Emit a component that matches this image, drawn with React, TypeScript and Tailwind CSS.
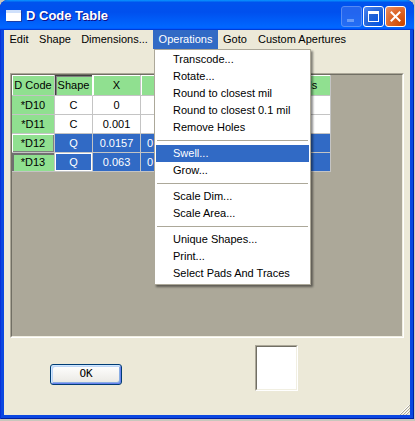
const columns = [
  { label: 'D Code', width: 'w-[43px]' },
  { label: 'Shape', width: 'w-[38px]' },
  { label: 'X', width: 'w-[48px]' },
  { label: 'Y', width: 'w-[48px]' },
  { label: '', width: 'w-[48px]' },
  { label: '', width: 'w-[48px]' },
  { label: 'Mils', width: 'w-[46px]' },
];

const rows = [
  { code: '*D10', cells: ['C', '0', '', '', '', ''], selected: false },
  { code: '*D11', cells: ['C', '0.001', '', '', '', ''], selected: false },
  { code: '*D12', cells: ['Q', '0.0157', '0', '', '', ''], selected: true },
  { code: '*D13', cells: ['Q', '0.063', '0', '', '', ''], selected: true },
];

const menuBar = [
  { label: 'Edit', width: 'w-[30px]' },
  { label: 'Shape', width: 'w-[42px]' },
  { label: 'Dimensions...', width: 'w-[77px]' },
  { label: 'Operations', width: 'w-[65px]', open: true },
  { label: 'Goto', width: 'w-[34px]' },
  { label: 'Custom Apertures', width: 'w-[100px]' },
];

type MenuEntry = { label: string; active?: boolean } | 'sep';

const operations: MenuEntry[] = [
  { label: 'Transcode...' },
  { label: 'Rotate...' },
  { label: 'Round to closest mil' },
  { label: 'Round to closest 0.1 mil' },
  { label: 'Remove Holes' },
  'sep',
  { label: 'Swell...', active: true },
  { label: 'Grow...' },
  'sep',
  { label: 'Scale Dim...' },
  { label: 'Scale Area...' },
  'sep',
  { label: 'Unique Shapes...' },
  { label: 'Print...' },
  { label: 'Select Pads And Traces' },
];

function TitleBar() {
  return (
    <div className="h-[30px] shrink-0 flex items-start bg-[linear-gradient(180deg,#0997ff_0%,#0053ee_8%,#0050ee_40%,#0066ff_88%,#0066ff_93%,#005bff_95%,#003dd7_96%,#003dd7_100%)]">
      <div className="mt-[10px] ml-[6px] w-[15px] h-[11px] bg-white border-t-[3px] border-[#cfe0fb] shadow-[1px_1px_0_#1a3fa8]" />
      <span className="mt-[8px] ml-[5px] text-white font-bold text-[13px] leading-[16px] [text-shadow:1px_1px_#0f1089]">
        D Code Table
      </span>
      <div className="ml-auto mr-[8px] mt-[6px] flex gap-[1px]">
        <div className="w-[21px] h-[21px] rounded-[3px] border border-[#8fb0f6] bg-[#3b73ee] opacity-60 flex items-end pl-[5px] pb-[4px]">
          <div className="w-[7px] h-[3px] bg-[#aac4f7]" />
        </div>
        <div className="w-[21px] h-[21px] rounded-[3px] border border-white bg-[radial-gradient(circle_at_90%_90%,#0054e9_0%,#2263d5_55%,#4480f0_90%,#6aa0ff_100%)] flex items-center justify-center">
          <div className="w-[11px] h-[11px] border border-white border-t-[3px]" />
        </div>
        <div className="w-[21px] h-[21px] rounded-[3px] border border-white bg-[radial-gradient(circle_at_90%_90%,#cc4600_0%,#dc6527_55%,#e8885a_90%,#f3a07a_100%)] flex items-center justify-center">
          <svg width="11" height="11" viewBox="0 0 11 11">
            <path d="M1.5 1.5 L9.5 9.5 M9.5 1.5 L1.5 9.5" stroke="#fff" strokeWidth="2" strokeLinecap="square" />
          </svg>
        </div>
      </div>
    </div>
  );
}

function MenuBar() {
  return (
    <div className="h-[19px] flex">
      {menuBar.map((m) => (
        <div
          key={m.label}
          className={`${m.width} h-[19px] flex items-center justify-center whitespace-nowrap ${
            m.open ? 'bg-[#316ac5] text-white' : ''
          }`}
        >
          {m.label}
        </div>
      ))}
    </div>
  );
}

function Table() {
  return (
    <div className="flex flex-col w-[319px]">
      <div className="flex h-[21px]">
        {columns.map((c, i) => (
          <div
            key={i}
            className={`${c.width} h-full bg-[#90e090] border-r border-b border-[#c4c4c4] flex items-center justify-center ${
              i === 1 ? 'shadow-[inset_1px_1px_0_#404040,inset_2px_2px_0_#808080] border-r-white' : 'shadow-[inset_1px_1px_0_#ffffff]'
            }`}
          >
            {c.label}
          </div>
        ))}
      </div>
      {rows.map((r, ri) => (
        <div key={r.code} className="flex h-[19px]">
          <div
            className={`w-[43px] h-full bg-[#90e090] border-r border-b border-[#c4c4c4] flex items-center justify-center ${
              ri === 2
                ? 'shadow-[inset_1px_1px_0_#ffffff,inset_-1px_-1px_0_#808080]'
                : ri === 3
                  ? 'shadow-[inset_2px_2px_0_#707070]'
                  : ''
            }`}
          >
            {r.code}
          </div>
          {r.cells.map((v, ci) => (
            <div
              key={ci}
              className={`${columns[ci + 1].width} h-full border-r border-b border-[#c4c4c4] flex items-center ${
                ci === 2 ? 'justify-start pl-[6px]' : 'justify-center'
              } ${r.selected ? 'bg-[#316ac5] text-white' : 'bg-white'} ${
                ri === 3 && ci === 0 ? 'shadow-[inset_0_0_0_1px_#ffffff]' : ''
              }`}
            >
              {v}
            </div>
          ))}
        </div>
      ))}
    </div>
  );
}

function OperationsMenu() {
  return (
    <div className="absolute left-[150px] top-[19px] w-[157px] bg-white border border-[#aca899] p-[1px] pb-[2px] shadow-[2px_2px_2px_rgba(0,0,0,0.45)]">
      {operations.map((item, i) =>
        item === 'sep' ? (
          <div key={i} className="h-[9px] pt-[4px] px-[1px]">
            <div className="h-px bg-[#aca899]" />
          </div>
        ) : (
          <div
            key={i}
            className={`h-[17px] pl-[17px] flex items-center whitespace-nowrap ${
              item.active ? 'bg-[#316ac5] text-white' : ''
            }`}
          >
            {item.label}
          </div>
        ),
      )}
    </div>
  );
}

export default function App() {
  return (
    <div className="w-[415px] h-[421px] bg-[#c9c7bc] font-['Liberation_Sans',Arial,sans-serif] text-[11px] text-black">
      <div className="w-[414px] h-[419px] flex flex-col rounded-t-[8px] overflow-hidden bg-[#0b47e1] shadow-[inset_1px_0_0_#0831d9,inset_-1px_0_0_#001ea0,inset_0_-1px_0_#001ea0]">
        <TitleBar />
        <div className="relative flex-1 mx-[4px] mb-[4px] bg-[#ece9d8] flex flex-col">
          <MenuBar />
          <div className="mt-[24px] mx-[6px] h-[265px] border border-[#aca899] border-b-white border-r-white">
            <div className="h-full border border-[#716f64] border-b-[#f1efe2] border-r-[#f1efe2] bg-[#aca899]">
              <Table />
            </div>
          </div>
          <div className="flex items-start pl-[46px] pt-[7px]">
            <button className="mt-[19px] w-[72px] h-[21px] rounded-[3px] border border-[#003c74] bg-[linear-gradient(180deg,#ffffff_0%,#ecebe6_86%,#d6d0c5_100%)] shadow-[inset_1px_1px_0_#cee7ff,inset_-1px_-1px_0_#6982ee,inset_2px_2px_0_#bcd4f6,inset_-2px_-2px_0_#89ade4] flex items-center justify-center font-['DejaVu_Sans_Mono',monospace] text-[11px]">
              OK
            </button>
            <div className="ml-[133px] w-[43px] h-[46px] bg-white border border-[#aca899] border-b-white border-r-white">
              <div className="h-full border border-[#716f64] border-b-[#f1efe2] border-r-[#f1efe2]" />
            </div>
          </div>
          <svg className="absolute right-0 bottom-0" width="12" height="12" viewBox="0 0 12 12">
            <path d="M11 2 L2 11 M11 5 L5 11 M11 8 L8 11" stroke="#ffffff" strokeWidth="1" />
            <path d="M12 2 L2 12 M12 5 L5 12 M12 8 L8 12" stroke="#aca899" strokeWidth="1" />
          </svg>
          <OperationsMenu />
        </div>
      </div>
    </div>
  );
}
